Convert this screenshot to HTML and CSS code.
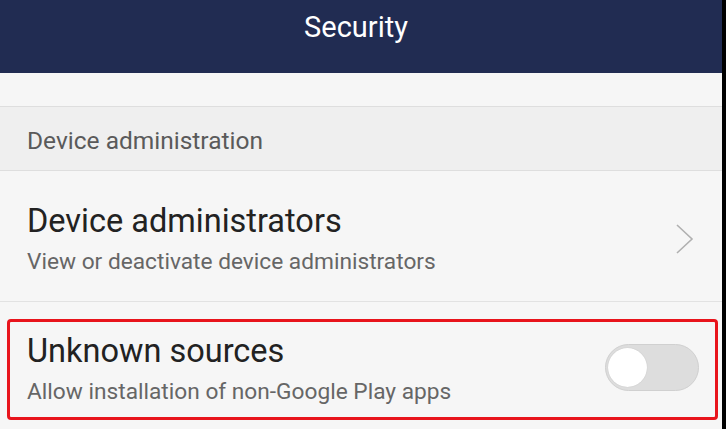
FILE: index.html
```html
<!DOCTYPE html>
<html lang="en">
<head>
    <meta charset="UTF-8">
    <meta name="viewport" content="width=device-width, initial-scale=1.0">
    <title>Security</title>
    <link rel="stylesheet" href="styles.css">
</head>
<body>
    <div class="screen">
        <header class="title-bar">Security</header>

        <div class="spacer"></div>

        <div class="section-label">Device administration</div>

        <div class="row">
            <div class="row-text">
                <div class="row-title">Device administrators</div>
                <div class="row-sub">View or deactivate device administrators</div>
            </div>
            <svg class="chevron" width="20" height="32" viewBox="0 0 20 32">
                <path d="M2 2 L17 16 L2 30" fill="none" stroke="#b0b0b0" stroke-width="1.6"/>
            </svg>
        </div>

        <!-- highlighted row -->
        <div class="row highlight">
            <div class="row-text">
                <div class="row-title">Unknown sources</div>
                <div class="row-sub">Allow installation of non-Google Play apps</div>
            </div>
            <div class="toggle">
                <div class="knob"></div>
            </div>
        </div>
    </div>
</body>
</html>
```

FILE: styles.css
```css
body {
    margin: 0;
    background: #000;
    font-family: Roboto, "Liberation Sans", sans-serif;
    overflow: hidden;
}
.screen {
    width: 722px;
    height: 429px;
    background: #f6f6f6;
    overflow: hidden;
}
.title-bar {
    background: #212c52;
    color: #fff;
    height: 73px;
    box-sizing: border-box;
    padding: 10px 10px 0 0;
    font-size: 29px;
    line-height: 34px;
    text-align: center;
}
.spacer {
    height: 33px;
    border-bottom: 1px solid #dedede;
}
.section-label {
    background: #efefef;
    color: #5a5a5a;
    font-size: 24.5px;
    line-height: 30px;
    padding: 19px 27px 14px;
    border-bottom: 1px solid #dedede;
}
.row {
    display: flex;
    align-items: center;
    justify-content: space-between;
    padding: 31px 27px 25px;
    border-bottom: 1px solid #e2e2e2;
}
.row-title {
    color: #222;
    font-size: 32.5px;
    line-height: 38px;
}
.row-sub {
    color: #666;
    font-size: 22.7px;
    line-height: 28px;
    margin-top: 8px;
}
.chevron {
    display: block;
}
.highlight {
    box-sizing: border-box;
    width: 711px;
    margin: 17px 0 0 7px;
    padding: 10px 16px 11px 17px;
    border: 3px solid #e8141c;
    border-radius: 4px;
}
.toggle {
    box-sizing: border-box;
    width: 94px;
    height: 47px;
    margin-bottom: 4px;
    padding: 0 2px;
    display: flex;
    align-items: center;
    background: #dddddd;
    border: 1px solid #d0d0d0;
    border-radius: 24px;
}
.knob {
    width: 39px;
    height: 39px;
    border-radius: 50%;
    background: #fff;
    box-shadow: 0 0 1px rgba(0, 0, 0, 0.2);
}
```
